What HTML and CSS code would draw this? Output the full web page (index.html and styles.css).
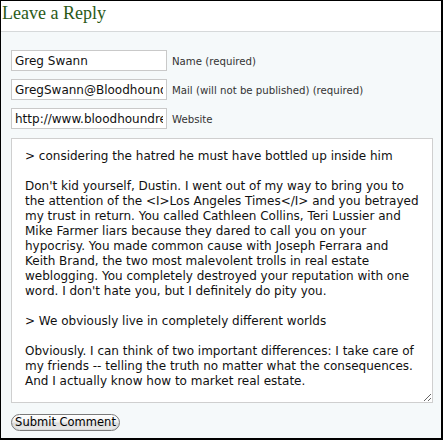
FILE: index.html
```html
<!DOCTYPE html>
<html>
<head>
<meta charset="utf-8">
<link rel="stylesheet" href="styles.css">
</head>
<body>
<div class="frame">
  <h3 class="reply-title">Leave a Reply</h3>
  <form class="comment-form">
    <div class="field">
      <input class="text-input" type="text" value="Greg Swann">
      <label class="field-label">Name (required)</label>
    </div>
    <div class="field">
      <input class="text-input" type="text" value="GregSwann@Bloodhoundrealty.com">
      <label class="field-label">Mail (will not be published) (required)</label>
    </div>
    <div class="field">
      <input class="text-input" type="text" value="http://www.bloodhoundrealty.com/">
      <label class="field-label">Website</label>
    </div>
    <textarea class="comment-box" wrap="off">&gt; considering the hatred he must have bottled up inside him

Don't kid yourself, Dustin. I went out of my way to bring you to
the attention of the &lt;I&gt;Los Angeles Times&lt;/I&gt; and you betrayed
my trust in return. You called Cathleen Collins, Teri Lussier and
Mike Farmer liars because they dared to call you on your
hypocrisy. You made common cause with Joseph Ferrara and
Keith Brand, the two most malevolent trolls in real estate
weblogging. You completely destroyed your reputation with one
word. I don't hate you, but I definitely do pity you.

&gt; We obviously live in completely different worlds

Obviously. I can think of two important differences: I take care of
my friends -- telling the truth no matter what the consequences.
And I actually know how to market real estate.</textarea>
    <div class="actions">
      <button class="submit-btn" type="button">Submit Comment</button>
    </div>
  </form>
</div>
</body>
</html>
```
FILE: styles.css
```css
html, body {
  margin: 0;
  padding: 0;
  background: #fff;
}
.frame {
  width: 443px;
  height: 440px;
  box-sizing: border-box;
  border-style: solid;
  border-color: #000;
  border-width: 1px 2px 2px 1px;
  background: #f5f9fa;
  display: flex;
  flex-direction: column;
  overflow: hidden;
}
.reply-title {
  margin: 0;
  height: 31px;
  box-sizing: border-box;
  padding: 0 0 0 1px;
  background: #fff;
  border-bottom: 1px solid #d6d9da;
  font-family: "Liberation Serif", "Times New Roman", serif;
  font-weight: normal;
  font-size: 18px;
  line-height: 24px;
  color: #2b5a17;
}
.comment-form {
  display: flex;
  flex-direction: column;
  padding: 18px 9px 0 10px;
}
.field {
  display: flex;
  align-items: center;
  gap: 5px;
  margin-bottom: 8px;
}
.text-input {
  width: 156px;
  height: 21px;
  box-sizing: border-box;
  border: 1px solid #c9c9c9;
  background: #fff;
  padding: 0 3px;
  margin: 0;
  font-family: "DejaVu Sans", Verdana, sans-serif;
  font-size: 12px;
  color: #111;
  outline: none;
}
.field-label {
  font-family: "DejaVu Sans", Verdana, sans-serif;
  font-size: 10.2px;
  color: #333;
  padding-top: 2px;
}
.comment-box {
  margin: 1px 0 0 0;
  width: 422px;
  height: 265px;
  box-sizing: border-box;
  border: 1px solid #cfcfcf;
  background: #fff;
  padding: 10px 12px 0 13px;
  font-family: "DejaVu Sans", Verdana, sans-serif;
  font-size: 12px;
  line-height: 15px;
  color: #111;
  white-space: pre;
  overflow: hidden;
  resize: both;
  outline: none;
}
.actions {
  margin-top: 9px;
}
.submit-btn {
  height: 17px;
  width: 109px;
  box-sizing: border-box;
  border: 1px solid #7a7a7a;
  border-radius: 9px;
  background: linear-gradient(#ffffff, #f2f2f2 45%, #dcdcdc 55%, #ececec);
  box-shadow: inset 0 -1px 1px rgba(0,0,0,0.08);
  padding: 0;
  margin: 0;
  font-family: "DejaVu Sans", "Lucida Grande", sans-serif;
  font-size: 11.5px;
  line-height: 15px;
  color: #000;
}
```
